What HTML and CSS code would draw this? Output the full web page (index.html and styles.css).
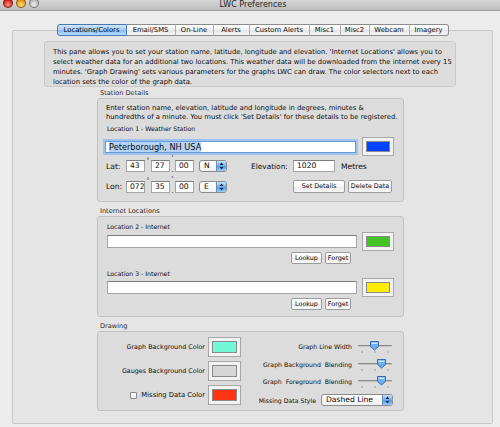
FILE: index.html
```html
<!DOCTYPE html>
<html>

<head>
    <meta http-equiv="content-type" content="text/html; charset=utf-8" />
    <title>LWC Preferences</title>
    <link rel="stylesheet" href="styles.css">
</head>

<body>
    <div class="titlebar">
        <div class="lights">
            <span class="light red"></span>
            <span class="light amber"></span>
            <span class="light off"></span>
        </div>
        <div class="title">LWC Preferences</div>
        <div></div>
    </div>

    <div class="tabview">
        <div class="tabs">
            <div class="tab active">Locations/Colors</div>
            <div class="tab">Email/SMS</div>
            <div class="tab">On-Line</div>
            <div class="tab">Alerts</div>
            <div class="tab">Custom Alerts</div>
            <div class="tab">Misc1</div>
            <div class="tab">Misc2</div>
            <div class="tab">Webcam</div>
            <div class="tab">Imagery</div>
        </div>

        <div class="pane">
            <div class="intro">
                This pane allows you to set your station name, latitude, longitude and elevation. 'Internet Locations' allows you to<br>
                select weather data for an additional two locations. This weather data will be downloaded from the internet every 15<br>
                minutes. 'Graph Drawing' sets various parameters for the graphs LWC can draw. The color selectors next to each<br>
                location sets the color of the graph data.
            </div>

            <!-- Station Details -->
            <div class="section station">
                <div class="section-title">Station Details</div>
                <div class="box station-box">
                    <div class="note">
                        Enter station name, elevation, latitude and longitude in degrees, minutes &amp;<br>
                        hundredths of a minute. You must click 'Set Details' for these details to be registered.
                    </div>
                    <div class="field-label first">Location 1 - Weather Station</div>
                    <div class="name-row">
                        <div class="field name-field"><span class="selected">Peterborough, NH USA</span></div>
                        <div class="well"><div class="swatch blue"></div></div>
                    </div>
                    <div class="coord-row lat">
                        <span class="coord-label">Lat:</span>
                        <div class="field small">43</div>
                        <span class="deg">°</span>
                        <div class="field small">27</div>
                        <span class="min"><span>'</span><span>.</span></span>
                        <div class="field small">00</div>
                        <div class="popup hemi">
                            <span class="popup-text">N</span>
                            <span class="popup-arrows"><svg width="5" height="8" viewBox="0 0 5 8"><path d="M2.5 0.5 L4.5 3 H0.5 Z M2.5 7.5 L4.5 5 H0.5 Z" fill="#1a2a40"/></svg></span>
                        </div>
                        <span class="elev-label">Elevation:</span>
                        <div class="field elev">1020</div>
                        <span class="unit">Metres</span>
                    </div>
                    <div class="coord-row lon">
                        <span class="coord-label">Lon:</span>
                        <div class="field small">072</div>
                        <span class="deg">°</span>
                        <div class="field small">35</div>
                        <span class="min"><span>'</span><span>.</span></span>
                        <div class="field small">00</div>
                        <div class="popup hemi">
                            <span class="popup-text">E</span>
                            <span class="popup-arrows"><svg width="5" height="8" viewBox="0 0 5 8"><path d="M2.5 0.5 L4.5 3 H0.5 Z M2.5 7.5 L4.5 5 H0.5 Z" fill="#1a2a40"/></svg></span>
                        </div>
                        <div class="btn set-btn">Set Details</div>
                        <div class="btn delete-btn">Delete Data</div>
                    </div>
                </div>
            </div>

            <!-- Internet Locations -->
            <div class="section internet">
                <div class="section-title">Internet Locations</div>
                <div class="box internet-box">
                    <div class="field-label">Location 2 - Internet</div>
                    <div class="loc-row">
                        <div class="field loc-field"></div>
                        <div class="well"><div class="swatch green"></div></div>
                    </div>
                    <div class="btn-row">
                        <div class="btn lookup">Lookup</div>
                        <div class="btn forget">Forget</div>
                    </div>
                    <div class="field-label second">Location 3 - Internet</div>
                    <div class="loc-row">
                        <div class="field loc-field"></div>
                        <div class="well"><div class="swatch yellow"></div></div>
                    </div>
                    <div class="btn-row">
                        <div class="btn lookup">Lookup</div>
                        <div class="btn forget">Forget</div>
                    </div>
                </div>
            </div>

            <!-- Drawing -->
            <div class="section drawing">
                <div class="section-title">Drawing</div>
                <div class="box drawing-box">
                    <div class="colors-col">
                        <div class="color-row">
                            <span>Graph Background Color</span>
                            <div class="well"><div class="swatch cyan"></div></div>
                        </div>
                        <div class="color-row">
                            <span>Gauges Background Color</span>
                            <div class="well"><div class="swatch grey"></div></div>
                        </div>
                        <div class="color-row">
                            <span class="checkbox"></span>
                            <span class="check-label">Missing Data Color</span>
                            <div class="well"><div class="swatch red"></div></div>
                        </div>
                    </div>
                    <div class="sliders-col">
                        <div class="slider-row first">
                            <span class="slider-label">Graph Line Width</span>
                            <svg class="slider" width="36" height="14" viewBox="0 0 36 14">
                                <rect x="1" y="5" width="34" height="2" rx="1" fill="#8a8a8a"/>
                                <rect x="1" y="6" width="34" height="1" fill="#c4c4c4"/>
                                <path d="M5 11 V13 M18 11 V13 M31 11 V13" stroke="#9a9a9a" stroke-width="1"/>
                                <path d="M13.5 1.5 H21.5 V6.5 L17.5 10 L13.5 6.5 Z" fill="#6eb0f0" stroke="#3a6aa8" stroke-width="1"/>
                                <path d="M14.5 2.5 H20.5 V4 H14.5 Z" fill="#c8e4ff"/>
                            </svg>
                        </div>
                        <div class="slider-row second">
                            <span class="slider-label">Graph Background &nbsp;Blending</span>
                            <svg class="slider" width="36" height="14" viewBox="0 0 36 14">
                                <rect x="1" y="5" width="34" height="2" rx="1" fill="#8a8a8a"/>
                                <rect x="1" y="6" width="34" height="1" fill="#c4c4c4"/>
                                <path d="M5 11 V13 M18 11 V13 M31 11 V13" stroke="#9a9a9a" stroke-width="1"/>
                                <path d="M20.5 1.5 H28.5 V6.5 L24.5 10 L20.5 6.5 Z" fill="#6eb0f0" stroke="#3a6aa8" stroke-width="1"/>
                                <path d="M21.5 2.5 H27.5 V4 H21.5 Z" fill="#c8e4ff"/>
                            </svg>
                        </div>
                        <div class="slider-row third">
                            <span class="slider-label">Graph &nbsp;Foreground &nbsp;Blending</span>
                            <svg class="slider" width="36" height="14" viewBox="0 0 36 14">
                                <rect x="1" y="5" width="34" height="2" rx="1" fill="#8a8a8a"/>
                                <rect x="1" y="6" width="34" height="1" fill="#c4c4c4"/>
                                <path d="M5 11 V13 M18 11 V13 M31 11 V13" stroke="#9a9a9a" stroke-width="1"/>
                                <path d="M20.5 1.5 H28.5 V6.5 L24.5 10 L20.5 6.5 Z" fill="#6eb0f0" stroke="#3a6aa8" stroke-width="1"/>
                                <path d="M21.5 2.5 H27.5 V4 H21.5 Z" fill="#c8e4ff"/>
                            </svg>
                        </div>
                        <div class="style-row">
                            <span class="slider-label">Missing Data Style</span>
                            <div class="popup style-popup">
                                <span class="popup-text">Dashed Line</span>
                                <span class="popup-arrows"><svg width="5" height="8" viewBox="0 0 5 8"><path d="M2.5 0.5 L4.5 3 H0.5 Z M2.5 7.5 L4.5 5 H0.5 Z" fill="#1a2a40"/></svg></span>
                            </div>
                        </div>
                    </div>
                </div>
            </div>
        </div>
    </div>
</body>

</html>
```

FILE: styles.css
```css
body {
    margin: 0;
    width: 500px;
    height: 427px;
    overflow: hidden;
    background: #ececec;
    font-family: "DejaVu Sans", "Noto Sans", sans-serif;
    color: #0c0c0c;
}

/* Title bar */
.titlebar {
    display: grid;
    grid-template-columns: 1fr auto 1fr;
    height: 10px;
    border-bottom: 1px solid #9c9c9c;
    background: linear-gradient(#d6d6d6, #bdbdbd);
}

.lights {
    display: flex;
    gap: 3px;
    margin: -2px 0 0 3px;
}

.light {
    width: 10px;
    height: 10px;
    border-radius: 50%;
    box-sizing: border-box;
    border: 1px solid rgba(0, 0, 0, 0.35);
}

.light.red {
    background: radial-gradient(circle at 50% 70%, #ff9a8a, #d8281c 60%, #a01810);
}

.light.amber {
    background: radial-gradient(circle at 50% 70%, #ffe08a, #e89a18 60%, #b06a10);
}

.light.off {
    background: radial-gradient(circle at 50% 70%, #f0f0f0, #bcbcbc 60%, #9a9a9a);
}

.title {
    margin-left: 6px;
    font-size: 8px;
    line-height: 10px;
    color: #1a1a1a;
}

/* Tabs */
.tabview {
    padding: 13px 7px 0 12px;
}

.tabs {
    position: relative;
    z-index: 1;
    display: flex;
    justify-content: center;
    height: 12px;
    margin-bottom: -6px;
}

.tab {
    box-sizing: border-box;
    height: 12px;
    border-top: 1px solid #8c8c8c;
    border-bottom: 1px solid #8c8c8c;
    border-right: 1px solid #b0b0b0;
    background: linear-gradient(#ffffff, #f0f0f0 50%, #e4e4e4 51%, #f6f6f6);
    font-size: 6.8px;
    line-height: 10px;
    text-align: center;
    white-space: nowrap;
}

.tab:first-child {
    border-left: 1px solid #4a78b0;
    border-radius: 3px 0 0 3px;
}

.tab:last-child {
    border-right: 1px solid #8c8c8c;
    border-radius: 0 3px 3px 0;
}

.tab.active {
    border-color: #4a78b0;
    background: linear-gradient(#cfe6fc, #a4cdf6 50%, #84bcf2 51%, #b4dcfc);
}

.tab:nth-child(1) { width: 70px; }
.tab:nth-child(2) { width: 49px; }
.tab:nth-child(3) { width: 38px; }
.tab:nth-child(4) { width: 36px; }
.tab:nth-child(5) { width: 60px; }
.tab:nth-child(6) { width: 31px; }
.tab:nth-child(7) { width: 29px; }
.tab:nth-child(8) { width: 40px; }
.tab:nth-child(9) { width: 39px; }

.pane {
    box-sizing: border-box;
    height: 394px;
    border: 1px solid #c8c8c8;
    border-radius: 2px;
    background: #e5e5e5;
}

.intro {
    box-sizing: border-box;
    width: 412px;
    height: 46px;
    margin: 10px 0 0 31px;
    padding: 5px 0 0 8px;
    border: 1px solid #cacaca;
    border-radius: 3px;
    background: #dcdcdc;
    font-size: 6.8px;
    line-height: 10px;
    white-space: nowrap;
}

/* Group boxes */
.section {
    width: 307px;
    margin-left: 84px;
}

.section.station {
    margin-top: 2px;
}

.section.internet,
.section.drawing {
    margin-top: 5px;
}

.section-title {
    padding-left: 3px;
    font-size: 6.6px;
    line-height: 9px;
    color: #2a2a2a;
}

.box {
    box-sizing: border-box;
    border: 1px solid #c2c2c2;
    border-radius: 3px;
    background: #dcdcdc;
}

.station-box {
    height: 104px;
    padding: 5px 0 0 8px;
}

.internet-box {
    height: 101px;
    padding: 5px 0 0 9px;
}

.drawing-box {
    display: flex;
    height: 80px;
    padding-top: 5px;
}

.note {
    font-size: 6.8px;
    line-height: 9px;
    white-space: nowrap;
}

.field-label {
    font-size: 6.2px;
    line-height: 9px;
}

.field-label.first {
    margin: 2px 0 0 1px;
}

.field-label.second {
    margin-top: 5px;
}

/* Inputs */
.field {
    box-sizing: border-box;
    height: 12px;
    padding-left: 3px;
    border: 1px solid #a4a4a4;
    border-top-color: #7c7c7c;
    background: #fff;
    font-size: 7.6px;
    line-height: 10px;
}

.name-row,
.loc-row {
    display: flex;
    align-items: center;
    height: 19px;
}

.name-row {
    margin-top: 4px;
}

.name-field {
    width: 251px;
    margin-left: -1px;
    border: 1px solid #6a9ad4;
    box-shadow: 0 0 0 2px #9cc4ee;
    font-size: 8.2px;
}

.selected {
    background: #b6d4f6;
}

.well {
    box-sizing: border-box;
    width: 32px;
    height: 19px;
    margin-left: 6px;
    padding: 3px;
    border: 1px solid #a8a8a8;
    background: #f2f2f2;
}

.swatch {
    height: 100%;
    box-sizing: border-box;
    border: 1px solid #8a8a8a;
}

.swatch.blue { background: #0044ff; }
.swatch.green { background: #44c424; }
.swatch.yellow { background: #ffec00; }
.swatch.cyan { background: #72f8d6; }
.swatch.grey { background: #d6d6d6; }
.swatch.red { background: #ff3414; }

.coord-row {
    display: flex;
    align-items: center;
}

.coord-row.lat {
    height: 12px;
    margin-top: 4px;
}

.coord-row.lon {
    height: 13px;
    margin-top: 8px;
}

.coord-label {
    width: 20px;
    font-size: 7.6px;
}

.field.small {
    width: 19px;
}

.deg,
.min {
    width: 6px;
    height: 12px;
    font-size: 6px;
    line-height: 6px;
    text-align: center;
}

.deg {
    align-self: flex-start;
    margin-top: -3px;
}

.min {
    width: 5px;
    display: flex;
    flex-direction: column;
    justify-content: space-between;
    margin-top: -4px;
    height: 18px;
    font-size: 7px;
}

.popup {
    display: flex;
    box-sizing: border-box;
    height: 12px;
    border: 1px solid #8a8a8a;
    border-radius: 3px;
    background: linear-gradient(#ffffff, #f0f0f0);
    overflow: hidden;
}

.popup-text {
    flex: 1;
    padding-left: 4px;
    font-size: 7.6px;
    line-height: 10px;
}

.popup-arrows {
    display: flex;
    align-items: center;
    justify-content: center;
    width: 9px;
    border-left: 1px solid #6a8cb8;
    background: linear-gradient(#c6e2fe, #6eaef0 50%, #4c98ea 51%, #9ad0fc);
}

.popup.hemi {
    width: 28px;
    margin-left: 5px;
}

.elev-label {
    width: 42px;
    margin-left: 24px;
    font-size: 7.4px;
}

.field.elev {
    width: 42px;
}

.unit {
    margin-left: 6px;
    font-size: 7.6px;
}

.btn {
    box-sizing: border-box;
    height: 12px;
    border: 1px solid #9c9c9c;
    border-radius: 2px;
    background: linear-gradient(#ffffff, #f4f4f4 50%, #e8e8e8 51%, #f8f8f8);
    font-size: 6.4px;
    line-height: 10px;
    text-align: center;
    white-space: nowrap;
}

.set-btn {
    width: 52px;
    height: 13px;
    margin-left: 66px;
}

.delete-btn {
    width: 44px;
    height: 13px;
    margin-left: 3px;
}

.loc-row {
    margin-top: 1px;
}

.field-label.second + .loc-row {
    margin-top: 0;
}

.loc-field {
    width: 250px;
    height: 13px;
}

.loc-row .well {
    margin-left: 5px;
}

.btn-row {
    display: flex;
    margin-top: 1px;
}

.lookup {
    width: 31px;
    margin-left: 184px;
}

.forget {
    width: 26px;
    margin-left: 3px;
}

/* Drawing */
.colors-col {
    display: flex;
    flex-direction: column;
    gap: 4px;
    width: 143px;
}

.color-row {
    display: flex;
    align-items: center;
    justify-content: flex-end;
    height: 20px;
    font-size: 6.4px;
}

.color-row .well {
    width: 33px;
    height: 20px;
    margin-left: 3px;
}

.checkbox {
    box-sizing: border-box;
    width: 7px;
    height: 7px;
    margin-right: 4px;
    border: 1px solid #8a8a8a;
    border-radius: 1px;
    background: linear-gradient(#ffffff, #ececec);
}

.check-label {
    font-size: 6.8px;
}

.sliders-col {
    display: flex;
    flex-direction: column;
    align-items: flex-end;
    width: 152px;
}

.slider-row {
    display: flex;
    align-items: flex-start;
    height: 14px;
}

.slider-row.first {
    margin-top: 3px;
}

.slider-row.second {
    margin-top: 3.5px;
}

.slider-row.third {
    margin-top: 3px;
}

.slider-label {
    padding-top: 2px;
    font-size: 6.2px;
    line-height: 9px;
    white-space: nowrap;
}

.slider {
    display: block;
    margin-left: 5px;
}

.style-row {
    display: flex;
    align-items: center;
    margin-top: 5.5px;
}

.style-row .slider-label {
    padding-top: 0;
}

.style-popup {
    width: 72px;
    margin-left: 5px;
}
```
